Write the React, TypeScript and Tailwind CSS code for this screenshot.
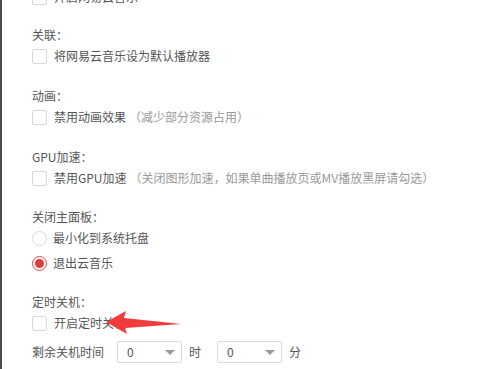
import React from "react";

function Checkbox() {
  return <span className="w-[15px] h-[15px] shrink-0 rounded-[2px] border border-[#d8d8d8] bg-white" />;
}

function Radio({ checked }: { checked?: boolean }) {
  if (checked) {
    return (
      <span className="w-[15px] h-[15px] shrink-0 rounded-full border border-[#e64545] bg-white flex items-center justify-center">
        <span className="w-[9px] h-[9px] rounded-full bg-[#e33b3b]" />
      </span>
    );
  }
  return <span className="w-[15px] h-[15px] shrink-0 rounded-full border border-[#d8d8d8] bg-white" />;
}

function Label({ text, mt }: { text: string; mt: string }) {
  return <div className={`h-[20px] flex items-center text-[#555] ${mt}`}>{text}</div>;
}

function CheckRow({ text, hint }: { text: string; hint?: string }) {
  return (
    <div className="h-[22px] flex items-center">
      <Checkbox />
      <span className="ml-[7px] text-[#555]">{text}</span>
      {hint && <span className="ml-[3px] text-[#999]">{hint}</span>}
    </div>
  );
}

function Select() {
  return (
    <div className="w-[65px] h-[22px] border border-[#dcdcdc] rounded-[2px] bg-white flex items-center justify-between pl-[9px] pr-[6px]">
      <span className="text-[#555]">0</span>
      <span className="w-0 h-0 border-l-[5px] border-r-[5px] border-t-[5px] border-l-transparent border-r-transparent border-t-[#999]" />
    </div>
  );
}

export default function App() {
  return (
    <div
      className="relative w-[499px] h-[369px] overflow-hidden bg-white border-l-2 border-[#4a4a4a] text-[12px]"
      style={{ fontFamily: '"Noto Sans CJK SC", "Liberation Sans", sans-serif' }}
    >
      <div className="pl-[30px] mt-[-14px] flex flex-col">
        <CheckRow text="开启网易云音乐" />

        <Label text="关联：" mt="mt-[17px]" />
        <CheckRow text="将网易云音乐设为默认播放器" />

        <Label text="动画：" mt="mt-[19px]" />
        <CheckRow text="禁用动画效果" hint="（减少部分资源占用）" />

        <Label text="GPU加速：" mt="mt-[19px]" />
        <CheckRow text="禁用GPU加速" hint="（关闭图形加速，如果单曲播放页或MV播放黑屏请勾选）" />

        <Label text="关闭主面板：" mt="mt-[18px]" />
        <div className="h-[22px] flex items-center">
          <Radio />
          <span className="ml-[6px] text-[#555]">最小化到系统托盘</span>
        </div>
        <div className="h-[22px] mt-[3px] flex items-center">
          <Radio checked />
          <span className="ml-[6px] text-[#555]">退出云音乐</span>
        </div>

        <Label text="定时关机：" mt="mt-[18px]" />
        <CheckRow text="开启定时关机" />

        <div className="h-[24px] mt-[6px] flex items-center text-[#555]">
          <span className="w-[85px]">剩余关机时间</span>
          <Select />
          <span className="ml-[7px] w-[28px]">时</span>
          <Select />
          <span className="ml-[7px]">分</span>
        </div>
      </div>

      {/* red annotation arrow */}
      <svg className="absolute left-0 top-0" width="499" height="369">
        <polygon points="104,322 124,311 122,318 179,324 123,328 125,334" fill="#f23c3c" />
      </svg>
    </div>
  );
}
